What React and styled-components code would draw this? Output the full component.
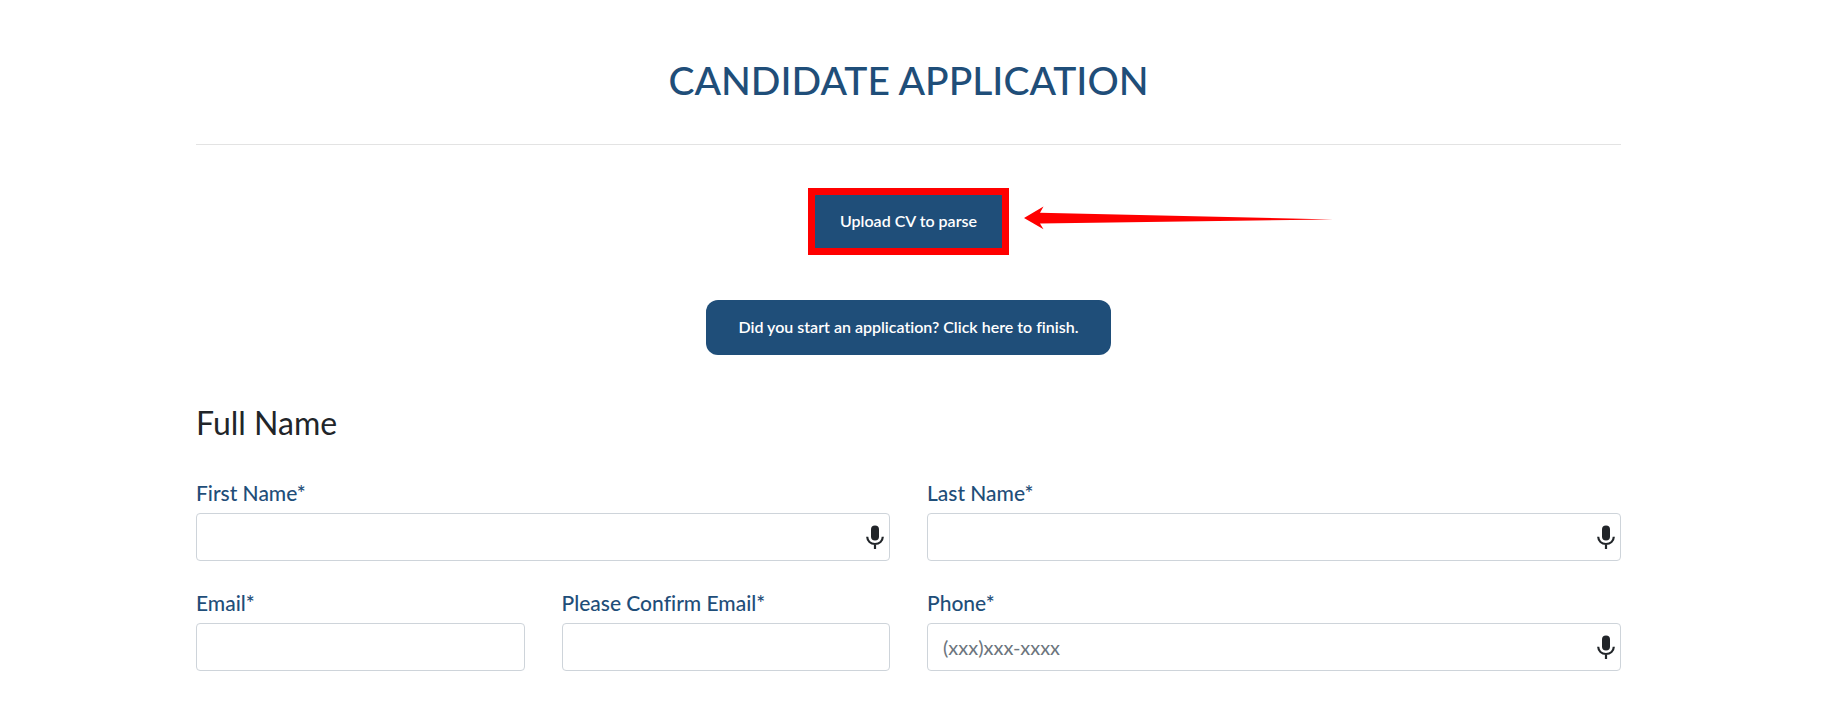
import React from "react";
import styled, { createGlobalStyle } from "styled-components";

function MicIcon() {
  return (
    <svg width="18" height="24" viewBox="0 0 18 24" aria-hidden="true">
      <rect x="5" y="0.4" width="8" height="15.2" rx="4" fill="#212529" />
      <path
        d="M1.2 11.8C1.4 16.2 4.6 19 9 19s7.6-2.8 7.8-7.2M9 19v5"
        fill="none"
        stroke="#212529"
        strokeWidth="2.2"
      />
    </svg>
  );
}

function Field({ id, label, type = "text", placeholder, hasMic }) {
  return (
    <FieldContainer>
      <Label htmlFor={id}>{label}</Label>
      <InputWrapper>
        <Input id={id} type={type} placeholder={placeholder} $hasMic={hasMic} />
        {hasMic && (
          <MicButton type="button" aria-label="Dictate">
            <MicIcon />
          </MicButton>
        )}
      </InputWrapper>
    </FieldContainer>
  );
}

function App() {
  return (
    <>
      <GlobalStyle />
      <Page>
        <Title>CANDIDATE APPLICATION</Title>
        <Actions>
          <UploadContainer>
            <Button type="button">Upload CV to parse</Button>
            <Highlight />
            <Arrow width="310" height="24" viewBox="0 0 310 24">
              <path d="M0 12L19.5 0.5L16 6.8L309 13.5L16 17.5L19.5 23.2Z" />
            </Arrow>
          </UploadContainer>
          <Button type="button">
            Did you start an application? Click here to finish.
          </Button>
        </Actions>
        <form>
          <SectionTitle>Full Name</SectionTitle>
          <FormGrid>
            <Field id="firstName" label="First Name*" hasMic />
            <Field id="lastName" label="Last Name*" hasMic />
            <FormGrid>
              <Field id="email" label="Email*" type="email" />
              <Field
                id="confirmEmail"
                label="Please Confirm Email*"
                type="email"
              />
            </FormGrid>
            <Field
              id="phone"
              label="Phone*"
              type="tel"
              placeholder="(xxx)xxx-xxxx"
              hasMic
            />
          </FormGrid>
        </form>
      </Page>
    </>
  );
}

export default App;

const GlobalStyle = createGlobalStyle`
  * {
    box-sizing: border-box;
  }

  body {
    margin: 0;
    background-color: #fff;
    color: #212529;
    font-family: Lato, sans-serif;
    font-variant-ligatures: none;
  }

  button,
  input {
    font-family: inherit;
    font-variant-ligatures: inherit;
  }
`;

const Page = styled.main`
  padding: 56px 226px 32px 196px;
`;

const Title = styled.h1`
  margin: 0;
  padding-bottom: 40px;
  border-bottom: 1px solid #e3e3e3;
  color: #1f4e79;
  font-size: 39px;
  font-weight: 500;
  line-height: 48px;
  text-align: center;
`;

const Actions = styled.div`
  display: flex;
  flex-direction: column;
  align-items: center;
  gap: 51px;
  padding: 49px 0;
`;

const UploadContainer = styled.div`
  position: relative;
  display: flex;
`;

const Button = styled.button`
  height: 55px;
  padding: 0 32px 2px;
  border: none;
  border-radius: 12px;
  background-color: #1f4e79;
  color: #fff;
  font-size: 16px;
  font-weight: 600;
  cursor: pointer;
`;

const Highlight = styled.div`
  position: absolute;
  inset: -6px 0;
  border: 7px solid #ff0000;
  pointer-events: none;
`;

const Arrow = styled.svg`
  position: absolute;
  top: 12px;
  left: calc(100% + 15px);
  fill: #ff0000;
`;

const SectionTitle = styled.h2`
  margin: 0 0 39px;
  font-size: 32px;
  font-weight: 400;
  line-height: 38px;
`;

const FormGrid = styled.div`
  display: grid;
  grid-template-columns: 1fr 1fr;
  gap: 30px 37px;
`;

const FieldContainer = styled.div`
  display: flex;
  flex-direction: column;
  gap: 8px;
  min-width: 0;
`;

const Label = styled.label`
  color: #1f4e79;
  font-size: 21px;
  font-weight: 500;
  line-height: 24px;
`;

const InputWrapper = styled.div`
  position: relative;
  display: flex;
`;

const Input = styled.input`
  width: 100%;
  height: 48px;
  padding: 0 ${({ $hasMic }) => ($hasMic ? "32px" : "15px")} 0 15px;
  border: 1px solid #ced4da;
  border-radius: 4px;
  background-color: #fff;
  color: #212529;
  font-size: 20px;

  &::placeholder {
    color: #6c757d;
    opacity: 1;
  }
`;

const MicButton = styled.button`
  position: absolute;
  top: 0;
  right: 0;
  display: flex;
  align-items: center;
  height: 100%;
  padding: 0 6px;
  border: none;
  background: none;
  cursor: pointer;
`;
